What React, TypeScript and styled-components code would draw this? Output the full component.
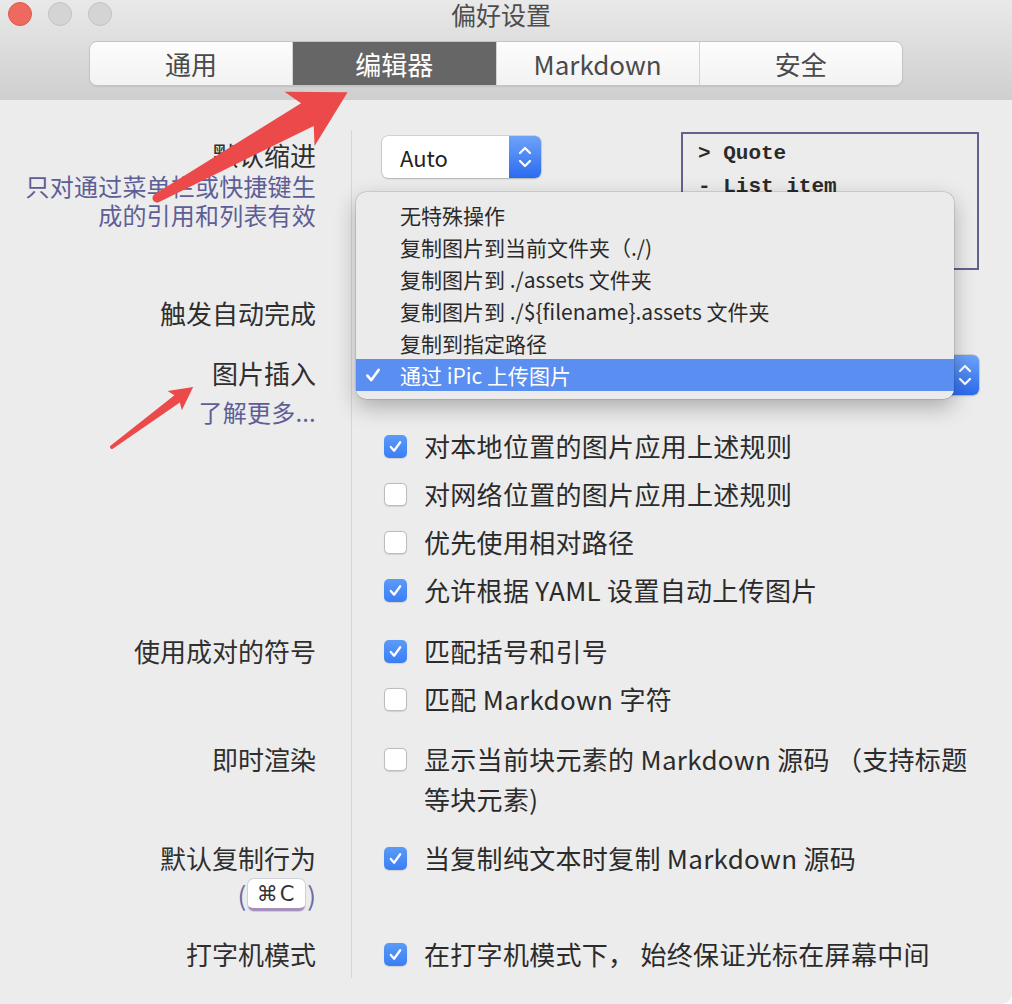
import styled, { createGlobalStyle } from "styled-components";

const GlobalStyle = createGlobalStyle`
  html, body {
    margin: 0;
    padding: 0;
    background: #fff;
  }
  body {
    font-family: "Noto Sans CJK SC", "Noto Sans", sans-serif;
  }
`;

const Window = styled.div`
  position: relative;
  width: 1012px;
  height: 1004px;
  background: #ececec;
  overflow: hidden;
  border-bottom-right-radius: 10px;
  color: #2f2f2f;
`;

const TitleBar = styled.header`
  height: 100px;
  background: linear-gradient(#e9e9e9, #cfcfcf);
  display: flex;
  flex-direction: column;
`;

const TitleRow = styled.div`
  height: 28px;
  display: grid;
  grid-template-columns: 1fr auto 1fr;
  align-items: center;
`;

const Lights = styled.div`
  display: flex;
  gap: 16px;
  padding-left: 8px;
`;

const Light = styled.span<{ $close?: boolean }>`
  width: 24px;
  height: 24px;
  border-radius: 50%;
  box-sizing: border-box;
  background: ${({ $close }) => ($close ? "#ee6a5f" : "#d4d4d4")};
  border: 1px solid ${({ $close }) => ($close ? "#de5a4e" : "#c3c3c3")};
`;

const Title = styled.div`
  font-size: 25px;
  line-height: 28px;
  color: #4d4d4d;
  margin-right: 10px;
`;

const Segmented = styled.nav`
  margin: 13px 0 0 89px;
  width: 814px;
  height: 45px;
  box-sizing: border-box;
  display: flex;
  border: 1px solid #c4c4c4;
  border-radius: 8px;
  overflow: hidden;
  background: linear-gradient(#fdfdfd, #f2f2f2);
  box-shadow: 0 1px 1px rgba(0, 0, 0, 0.08);
`;

const Segment = styled.div<{ $active?: boolean }>`
  flex: 1;
  display: flex;
  align-items: center;
  justify-content: center;
  font-size: 26px;
  color: ${({ $active }) => ($active ? "#fff" : "#4a4a4a")};
  background: ${({ $active }) => ($active ? "#666" : "transparent")};
  & + & {
    border-left: 1px solid #d3d3d3;
  }
`;

const Prefs = styled.main`
  display: grid;
  grid-template-columns: 352px 1fr;
  padding-top: 30px;
`;

const Label = styled.div<{ $top: number }>`
  border-right: 1px solid #d6d6d6;
  padding: ${({ $top }) => $top}px 35px 0 0;
  text-align: right;
  font-size: 26px;
  line-height: 32px;
  color: #2f2f2f;
`;

const Hint = styled.div<{ $mt?: number }>`
  margin-top: ${({ $mt }) => $mt ?? 0}px;
  font-size: 24px;
  line-height: 29px;
  letter-spacing: 0.2px;
  color: #5e5e97;
`;

const Controls = styled.div<{ $pb?: number }>`
  padding: 0 33px ${({ $pb }) => $pb ?? 0}px 30px;
  display: flex;
  flex-direction: column;
  align-items: stretch;
`;

const IndentControls = styled(Controls)`
  flex-direction: row;
  align-items: flex-start;
`;

const SelectWrap = styled.div<{ $mt: number; $w?: number }>`
  position: relative;
  margin-top: ${({ $mt }) => $mt}px;
  width: ${({ $w }) => ($w ? `${$w}px` : "auto")};
`;

const Select = styled.div<{ $h: number }>`
  height: ${({ $h }) => $h}px;
  display: flex;
  background: #fff;
  border-radius: 6px;
  box-shadow: 0 0 0 0.5px rgba(0, 0, 0, 0.22), 0 1px 2px rgba(0, 0, 0, 0.15);
  font-size: 22px;
  color: #222;
`;

const SelectValue = styled.div`
  flex: 1;
  display: flex;
  align-items: center;
  padding-left: 18px;
`;

const Stepper = styled.div<{ $w: number }>`
  width: ${({ $w }) => $w}px;
  display: flex;
  align-items: center;
  justify-content: center;
  border-radius: 0 6px 6px 0;
  background: linear-gradient(#6ea3f9, #2b6bef);
`;

const CodeBox = styled.pre`
  margin: 2px 0 20px auto;
  width: 298px;
  height: 138px;
  box-sizing: border-box;
  border: 2px solid #62628f;
  padding: 3px 0 0 15px;
  font-family: "Liberation Mono", "DejaVu Sans Mono", monospace;
  font-size: 21px;
  font-weight: 700;
  line-height: 33px;
  color: #2a2a2a;
`;

const Menu = styled.ul`
  position: absolute;
  top: -163px;
  left: -26px;
  width: 598px;
  margin: 0;
  padding: 7px 0 8px;
  list-style: none;
  box-sizing: border-box;
  background: #ebebeb;
  border-radius: 10px;
  box-shadow: 0 0 0 0.5px rgba(0, 0, 0, 0.2), 0 8px 22px rgba(0, 0, 0, 0.28);
  z-index: 2;
`;

const MenuItem = styled.li<{ $selected?: boolean }>`
  display: flex;
  align-items: center;
  height: 32px;
  padding-left: 8px;
  font-size: 21px;
  color: ${({ $selected }) => ($selected ? "#fff" : "#2a2a2a")};
  background: ${({ $selected }) => ($selected ? "#5a8ef0" : "transparent")};
`;

const MenuCheck = styled.span`
  width: 36px;
  display: flex;
  align-items: center;
`;

const CheckList = styled.div<{ $mt?: number }>`
  margin-top: ${({ $mt }) => $mt ?? 0}px;
  padding-left: 2px;
  display: flex;
  flex-direction: column;
`;

const CheckItem = styled.div`
  display: flex;
  align-items: flex-start;
  gap: 17px;
  padding: 4px 0;
  font-size: 26px;
  line-height: 40px;
  letter-spacing: 0.3px;
  color: #2b2b2b;
`;

const Box = styled.span<{ $checked?: boolean }>`
  flex: none;
  width: 23px;
  height: 23px;
  margin-top: 8.5px;
  box-sizing: border-box;
  border-radius: 5px;
  display: flex;
  align-items: center;
  justify-content: center;
  background: ${({ $checked }) => ($checked ? "linear-gradient(#5b9bf8, #3a7ef5)" : "#fff")};
  border: ${({ $checked }) => ($checked ? "none" : "1px solid #bdbdbd")};
  box-shadow: 0 0.5px 1px rgba(0, 0, 0, 0.12);
`;

const KeyLine = styled.div`
  margin-top: 4px;
  display: flex;
  justify-content: flex-end;
  align-items: center;
  gap: 2px;
  color: #6b6ba3;
  font-size: 26px;
  line-height: 34px;
`;

const Key = styled.kbd`
  width: 57px;
  height: 32px;
  box-sizing: border-box;
  display: flex;
  align-items: center;
  justify-content: center;
  background: #fff;
  border-radius: 6px;
  border-bottom: 3px solid #a68fbd;
  box-shadow: 0 0 0 1px #d0d0da;
  font-family: "DejaVu Sans", "Noto Sans", sans-serif;
  font-size: 21px;
  letter-spacing: 2px;
  color: #333;
`;

const Overlay = styled.svg`
  position: absolute;
  inset: 0;
  pointer-events: none;
  z-index: 3;
`;

function Chevrons() {
  return (
    <svg width="14" height="24" viewBox="0 0 14 24">
      <polyline points="2,8 7,3 12,8" fill="none" stroke="#fff" strokeWidth="2.2" strokeLinecap="round" strokeLinejoin="round" />
      <polyline points="2,16 7,21 12,16" fill="none" stroke="#fff" strokeWidth="2.2" strokeLinecap="round" strokeLinejoin="round" />
    </svg>
  );
}

function Check({ color = "#fff", size = 15 }: { color?: string; size?: number }) {
  return (
    <svg width={size} height={size} viewBox="0 0 16 16">
      <polyline points="3,8.5 6.5,12.5 13,3.5" fill="none" stroke={color} strokeWidth="2.4" strokeLinecap="round" strokeLinejoin="round" />
    </svg>
  );
}

function Option({ checked, children }: { checked?: boolean; children: React.ReactNode }) {
  return (
    <CheckItem>
      <Box $checked={checked}>{checked && <Check />}</Box>
      <span>{children}</span>
    </CheckItem>
  );
}

const tabs = ["通用", "编辑器", "Markdown", "安全"];

const imageActions = [
  "无特殊操作",
  "复制图片到当前文件夹（./)",
  "复制图片到 ./assets 文件夹",
  "复制图片到 ./${filename}.assets 文件夹",
  "复制到指定路径",
  "通过 iPic 上传图片",
];

export default function App() {
  return (
    <>
      <GlobalStyle />
      <Window>
        <TitleBar>
          <TitleRow>
            <Lights>
              <Light $close />
              <Light />
              <Light />
            </Lights>
            <Title>偏好设置</Title>
          </TitleRow>
          <Segmented>
            {tabs.map((t) => (
              <Segment key={t} $active={t === "编辑器"}>
                {t}
              </Segment>
            ))}
          </Segmented>
        </TitleBar>

        <Prefs>
          <Label $top={9}>
            默认缩进
            <Hint>
              只对通过菜单栏或快捷键生
              <br />
              成的引用和列表有效
            </Hint>
          </Label>
          <IndentControls>
            <SelectWrap $mt={6} $w={159}>
              <Select $h={42}>
                <SelectValue>Auto</SelectValue>
                <Stepper $w={32}>
                  <Chevrons />
                </Stepper>
              </Select>
            </SelectWrap>
            <CodeBox>{"> Quote\n- List item"}</CodeBox>
          </IndentControls>

          <Label $top={7}>触发自动完成</Label>
          <Controls $pb={51} />

          <Label $top={16}>
            图片插入
            <Hint $mt={8}>了解更多...</Hint>
          </Label>
          <Controls $pb={13}>
            <SelectWrap $mt={14}>
              <Select $h={40}>
                <SelectValue />
                <Stepper $w={29}>
                  <Chevrons />
                </Stepper>
              </Select>
              <Menu>
                {imageActions.map((a, i) => {
                  const selected = i === imageActions.length - 1;
                  return (
                    <MenuItem key={a} $selected={selected}>
                      <MenuCheck>{selected && <Check size={18} />}</MenuCheck>
                      {a}
                    </MenuItem>
                  );
                })}
              </Menu>
            </SelectWrap>
            <CheckList $mt={27}>
              <Option checked>对本地位置的图片应用上述规则</Option>
              <Option>对网络位置的图片应用上述规则</Option>
              <Option>优先使用相对路径</Option>
              <Option checked>允许根据 YAML 设置自动上传图片</Option>
            </CheckList>
          </Controls>

          <Label $top={8}>使用成对的符号</Label>
          <Controls $pb={12}>
            <CheckList>
              <Option checked>匹配括号和引号</Option>
              <Option>匹配 Markdown 字符</Option>
            </CheckList>
          </Controls>

          <Label $top={8}>即时渲染</Label>
          <Controls $pb={11}>
            <CheckList>
              <Option>
                显示当前块元素的 Markdown 源码 （支持标题
                <br />
                等块元素)
              </Option>
            </CheckList>
          </Controls>

          <Label $top={8}>
            默认复制行为
            <KeyLine>
              (<Key>⌘C</Key>)
            </KeyLine>
          </Label>
          <Controls $pb={48}>
            <CheckList>
              <Option checked>当复制纯文本时复制 Markdown 源码</Option>
            </CheckList>
          </Controls>

          <Label $top={8}>打字机模式</Label>
          <Controls>
            <CheckList>
              <Option checked>在打字机模式下， 始终保证光标在屏幕中间</Option>
            </CheckList>
          </Controls>
        </Prefs>

        <Overlay width="1012" height="1004" viewBox="0 0 1012 1004">
          <path
            transform="translate(157 198) rotate(-29.03)"
            d="M0,-4.5 L172,-13 L163,-31 L218,0 L163,31 L172,13 L0,4.5 A4.5,4.5 0 0 1 0,-4.5 Z"
            fill="#ec4a4a"
          />
          <path
            transform="translate(112 447) rotate(-36.5)"
            d="M0,-2 L81,-4.5 L78,-12 L101,0 L78,12 L81,4.5 L0,2 A2,2 0 0 1 0,-2 Z"
            fill="#ec4a4a"
          />
        </Overlay>
      </Window>
    </>
  );
}
